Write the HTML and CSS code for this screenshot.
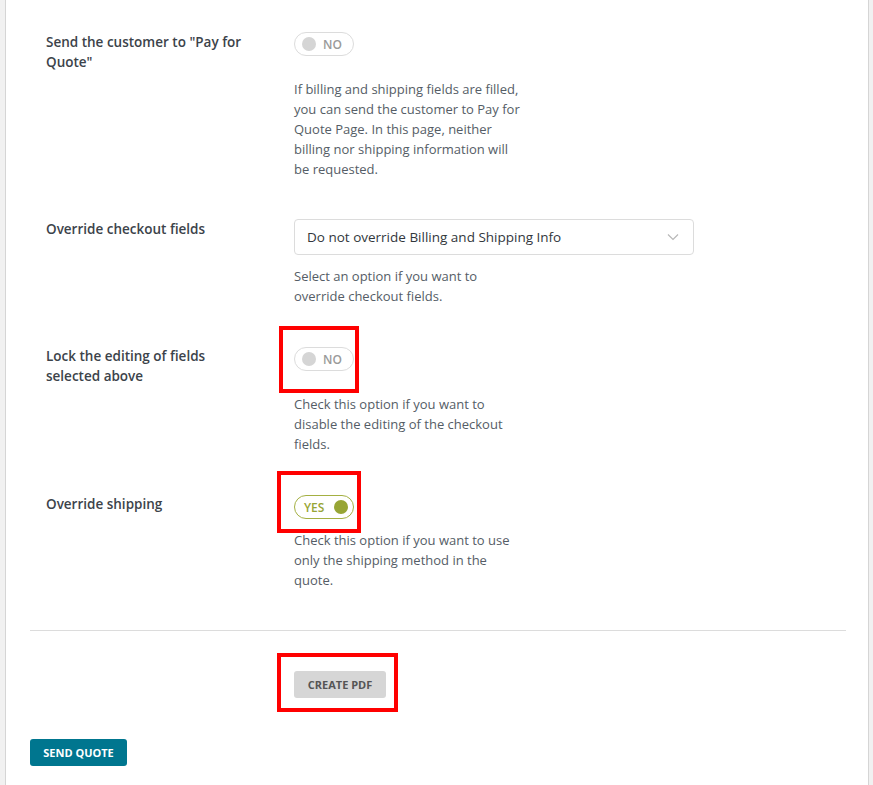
FILE: index.html
```html
<!DOCTYPE html>
<html lang="en">
<head>
<meta charset="utf-8">
<title>Quote settings</title>
<link rel="stylesheet" href="styles.css">
</head>
<body>
<div class="panel">
  <div class="form">
    <div class="row">
      <div class="label">Send the customer to "Pay for Quote"</div>
      <div class="field">
        <span class="toggle"><span class="knob"></span><span class="toggle-text">NO</span></span>
        <p class="desc desc-gap-lg">If billing and shipping fields are filled,<br>you can send the customer to Pay for<br>Quote Page. In this page, neither<br>billing nor shipping information will<br>be requested.</p>
      </div>
    </div>
    <div class="row">
      <div class="label">Override checkout fields</div>
      <div class="field">
        <div class="select">
          <span>Do not override Billing and Shipping Info</span>
          <svg class="chevron" width="12" height="8" viewBox="0 0 12 8"><path d="M1 1.5 L6 6.5 L11 1.5" fill="none" stroke="#b8b8b8" stroke-width="1.2"/></svg>
        </div>
        <p class="desc desc-gap-sm">Select an option if you want to<br>override checkout fields.</p>
      </div>
    </div>
    <div class="row">
      <div class="label">Lock the editing of fields selected above</div>
      <div class="field field-shift">
        <span class="mark-wrap">
          <span class="toggle"><span class="knob"></span><span class="toggle-text">NO</span></span>
          <span class="annot annot-lock"></span>
        </span>
        <p class="desc desc-gap-lg">Check this option if you want to<br>disable the editing of the checkout<br>fields.</p>
      </div>
    </div>
    <div class="row">
      <div class="label">Override shipping</div>
      <div class="field field-shift">
        <span class="mark-wrap">
          <span class="toggle toggle-on"><span class="toggle-text">YES</span><span class="knob"></span></span>
          <span class="annot annot-ship"></span>
        </span>
        <p class="desc desc-gap-sm">Check this option if you want to use<br>only the shipping method in the<br>quote.</p>
      </div>
    </div>
  </div>
  <hr class="divider">
  <div class="pdf-row">
    <span class="mark-wrap">
      <button class="btn btn-grey">CREATE PDF</button>
      <span class="annot annot-pdf"></span>
    </span>
  </div>
  <div class="send-row">
    <button class="btn btn-primary">SEND QUOTE</button>
  </div>
</div>
</body>
</html>
```
FILE: styles.css
```css
html, body {
  margin: 0;
  padding: 0;
}
body {
  background: #f1f1f1;
  font-family: "Open Sans", "Noto Sans", "Liberation Sans", sans-serif;
}
.panel {
  margin-left: 5px;
  width: 864px;
  min-height: 785px;
  box-sizing: border-box;
  background: #fff;
  border-left: 1px solid #d5d5d5;
  border-right: 1px solid #d5d5d5;
  padding: 12px 22px 0 24px;
}
.form {
  margin-left: 16px;
}
.row {
  display: grid;
  grid-template-columns: 248px 1fr;
  padding: 20px 0;
}
.label {
  width: 205px;
  font-size: 13.5px;
  font-weight: 600;
  line-height: 20px;
  color: #3c434a;
}
.field {
  display: flex;
  flex-direction: column;
  align-items: flex-start;
}
.field-shift {
  padding-top: 1px;
}
.toggle {
  display: flex;
  align-items: center;
  box-sizing: border-box;
  width: 60px;
  height: 24px;
  border: 1px solid #dcdcdc;
  border-radius: 12px;
  padding: 0 6px 0 7px;
  gap: 7px;
}
.knob {
  width: 14px;
  height: 14px;
  border-radius: 50%;
  background: #d5d5d5;
}
.toggle-text {
  font-size: 12px;
  font-weight: 600;
  color: #9a9a9a;
}
.toggle-on {
  border-color: #a4b042;
  justify-content: space-between;
  padding: 0 5px 0 9px;
}
.toggle-on .knob {
  background: #97a535;
}
.toggle-on .toggle-text {
  color: #97a535;
}
.desc {
  margin: 0;
  width: max-content;
  font-size: 13px;
  line-height: 20px;
  color: #555d66;
}
.desc-gap-lg {
  margin-top: 23px;
}
.desc-gap-sm {
  margin-top: 11px;
}
.select {
  box-sizing: border-box;
  width: 400px;
  height: 36px;
  border: 1px solid #dcdcdc;
  border-radius: 4px;
  display: flex;
  align-items: center;
  justify-content: space-between;
  padding: 0 14px 0 12px;
  font-size: 13.5px;
  color: #32373c;
}
.chevron {
  display: block;
}
.mark-wrap {
  position: relative;
  display: inline-block;
}
.annot {
  position: absolute;
  box-sizing: border-box;
  border: 4px solid #f00;
}
.annot-lock {
  left: -15px;
  top: -21px;
  width: 80px;
  height: 67px;
}
.annot-ship {
  left: -17px;
  top: -24px;
  width: 84px;
  height: 62px;
}
.annot-pdf {
  left: -17px;
  top: -18px;
  width: 121px;
  height: 59px;
}
.divider {
  margin: 20px 0 0;
  border: 0;
  border-top: 1px solid #dcdcdc;
}
.pdf-row {
  padding: 40px 0 0 264px;
}
.btn {
  display: block;
  border: 0;
  border-radius: 3px;
  font-family: inherit;
  font-size: 11px;
  font-weight: 700;
  height: 27px;
  padding: 0;
  cursor: pointer;
}
.btn-grey {
  width: 92px;
  background: #d6d6d6;
  color: #555;
}
.send-row {
  padding-top: 41px;
}
.btn-primary {
  width: 97px;
  background: #00768f;
  color: #fff;
}
```
